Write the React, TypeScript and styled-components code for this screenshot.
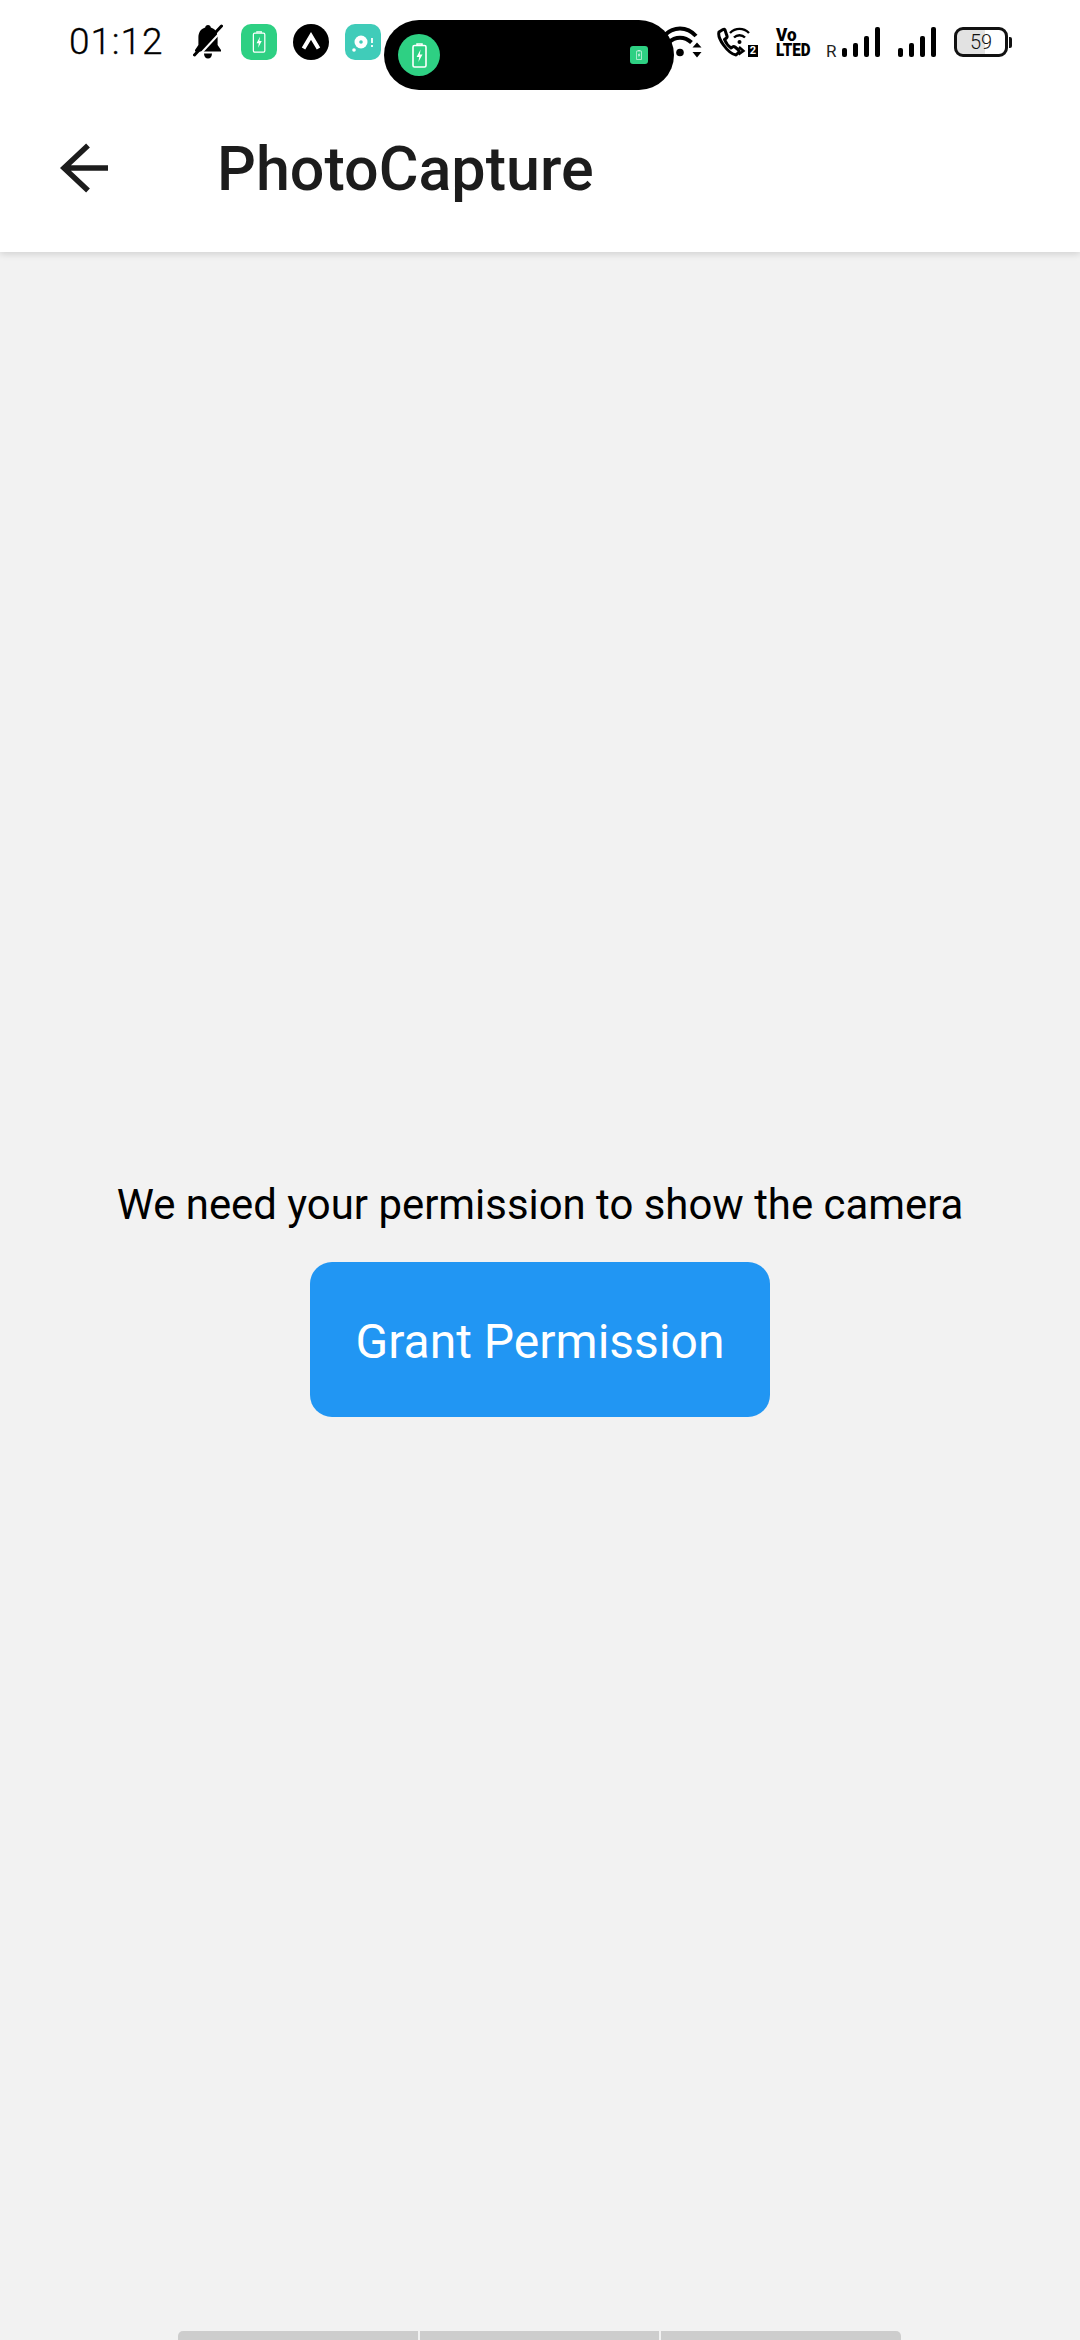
import React from "react";
import styled, { createGlobalStyle } from "styled-components";

const Global = createGlobalStyle`
  html, body { margin: 0; padding: 0; background: #f2f2f2; }
  * { box-sizing: border-box; }
  #root { width: 1080px; height: 2340px; }
`;

const Page = styled.div`
  position: relative;
  width: 1080px;
  height: 2340px;
  display: flex;
  flex-direction: column;
  overflow: hidden;
  background: #f2f2f2;
  font-family: Roboto, "Liberation Sans", sans-serif;
`;

const Header = styled.header`
  background: #fff;
  box-shadow: 0 2px 7px rgba(0, 0, 0, 0.14);
  position: relative;
  z-index: 1;
`;

const StatusBar = styled.div`
  position: relative;
  height: 84px;
  display: flex;
  justify-content: space-between;
  padding: 24px 68px 0 69px;
`;

const StatusGroup = styled.div`
  display: flex;
  align-items: flex-start;
`;

const Clock = styled.span`
  width: 93px;
  font-size: 37px;
  line-height: 36px;
  font-weight: 300;
  letter-spacing: 0.9px;
  color: #000;
  margin-right: 31px;
  -webkit-text-stroke: 0.3px #000;
`;

const Glyph = styled.svg<{ $left?: number; $top?: number }>`
  display: block;
  flex: none;
  margin-left: ${(p) => p.$left ?? 0}px;
  margin-top: ${(p) => p.$top ?? 0}px;
`;

const CallIcon = styled.div`
  position: relative;
  width: 41px;
  height: 30px;
  margin: 3px 0 0 15px;
`;

const SimBadge = styled.span`
  position: absolute;
  right: 0;
  bottom: 0;
  width: 10px;
  height: 12px;
  background: #000;
  color: #fff;
  font-size: 11px;
  line-height: 12px;
  font-weight: 700;
  text-align: center;
`;

const VolteStack = styled.div`
  width: 35px;
  height: 30px;
  margin: 3px 0 0 18px;
  display: flex;
  flex-direction: column;
  color: #000;
  font-weight: 900;
  font-size: 18px;
  line-height: 15px;
`;

const VolteLine = styled.span<{ $scale: number }>`
  display: block;
  white-space: nowrap;
  transform-origin: left center;
  transform: scaleX(${(p) => p.$scale});
`;

const Roaming = styled.span`
  font-size: 17px;
  line-height: 13px;
  color: #222;
  margin: 21px 0 0 15px;
  width: 10px;
`;

const BatteryBox = styled.div`
  position: relative;
  width: 54px;
  height: 30px;
  margin: 3px 0 0 17px;
  border: 3px solid #111;
  border-radius: 9px;
  overflow: hidden;
  display: flex;
  align-items: center;
  justify-content: center;
  font-size: 20px;
  font-weight: 300;
  color: #111;
  background: linear-gradient(90deg, #e2e2e2 0 59%, #fff 59% 100%);
`;

const BatteryNub = styled.div`
  width: 3px;
  height: 11px;
  margin: 13px 0 0 1px;
  background: #111;
  border-radius: 0 2px 2px 0;
`;

const Island = styled.div`
  position: absolute;
  left: 384px;
  top: 20px;
  width: 290px;
  height: 70px;
  border-radius: 35px;
  background: #000;
  display: flex;
  align-items: center;
  justify-content: space-between;
  padding: 0 26px 0 14px;
`;

const IslandCircle = styled.div`
  width: 42px;
  height: 42px;
  border-radius: 50%;
  background: #2ed083;
  display: flex;
  align-items: center;
  justify-content: center;
`;

const IslandChip = styled.div`
  width: 18px;
  height: 18px;
  border-radius: 3px;
  background: #2ed083;
  display: flex;
  align-items: center;
  justify-content: center;
`;

const Toolbar = styled.div`
  height: 168px;
  display: flex;
  align-items: center;
  padding-left: 60px;
`;

const BackButton = styled.button`
  width: 50px;
  height: 50px;
  padding: 0;
  border: 0;
  background: none;
  margin-right: 107px;
`;

const Title = styled.h1`
  margin: 0;
  padding-top: 2px;
  font-size: 61px;
  line-height: 70px;
  font-weight: 500;
  color: #1c1c1c;
`;

const Body = styled.main`
  flex: 1;
  display: flex;
  flex-direction: column;
  align-items: center;
  justify-content: center;
`;

const Message = styled.p`
  margin: 0 0 28px;
  font-size: 41.9px;
  line-height: 58px;
  color: #000;
  white-space: nowrap;
`;

const GrantButton = styled.button`
  width: 460px;
  height: 155px;
  border: 0;
  border-radius: 22px;
  background: #2196f3;
  color: #fff;
  font-family: inherit;
  font-size: 48px;
  padding: 5px 0 0;
`;

const GestureBar = styled.div`
  position: absolute;
  left: 178px;
  bottom: 0;
  width: 723px;
  height: 9px;
  display: flex;
  gap: 2px;
  border-radius: 5px 5px 0 0;
  overflow: hidden;
`;

const GestureSegment = styled.div`
  flex: 1;
  background: #cdcdcd;
`;

const BatteryMark = ({ size }: { size: number }) => (
  <svg width={size * 0.6} height={size} viewBox="0 0 15 25" fill="none">
    <path d="M5 2V1h5v1" stroke="#fff" strokeWidth="1.5" />
    <rect x="1" y="2.5" width="13" height="21.5" rx="1.5" stroke="#fff" strokeWidth="1.6" />
    <path d="M8.6 6.5 4.6 14h2.6l-.8 5 4.1-7.6H7.8z" fill="#fff" />
  </svg>
);

const SignalBars = ({ left }: { left: number }) => (
  <Glyph width="39" height="30" viewBox="0 0 39 30" $left={left} $top={3}>
    <rect x="0" y="21" width="5" height="9" rx="2" />
    <rect x="11" y="16" width="5" height="14" rx="2" />
    <rect x="22" y="9" width="5" height="21" rx="2" />
    <rect x="33" y="0" width="5" height="30" rx="2" />
  </Glyph>
);

export default function App() {
  return (
    <Page>
      <Global />
      <Header>
        <StatusBar>
          <StatusGroup>
            <Clock>01:12</Clock>
            <Glyph width="30" height="36" viewBox="0 0 30 36">
              <path d="M15 1c1.700 0 2.600 1 2.800 2.600C22.600 5 24.600 9 24.600 13.500V21l3.400 5v1.600H2V26l3.400-5v-7.500C5.400 9 7.400 5 12.200 3.600 12.400 2 13.300 1 15 1z" fill="#000" />
              <path d="M11 29.500h8c0 3-1.600 5-4 5s-4-2-4-5z" fill="#000" />
              <path d="M30 5.500 5 32.500" stroke="#fff" strokeWidth="2" />
              <path d="M28.500 2 1.500 31" stroke="#000" strokeWidth="3" strokeLinecap="round" />
            </Glyph>
            <Glyph width="36" height="36" viewBox="0 0 36 36" $left={18}>
              <rect width="36" height="36" rx="10" fill="#2ed083" />
              <g transform="translate(11.500 7) scale(.88)">
                <path d="M5 2V1h5v1" stroke="#fff" strokeWidth="1.500" fill="none" />
                <rect x="1" y="2.500" width="13" height="21.500" rx="1.500" stroke="#fff" strokeWidth="1.400" fill="none" />
                <path d="M8.600 6.500 4.600 14h2.600l-.8 5 4.100-7.600H7.800z" fill="#fff" />
              </g>
            </Glyph>
            <Glyph width="36" height="36" viewBox="0 0 36 36" $left={16}>
              <circle cx="18" cy="18" r="18" fill="#000" />
              <path d="M10.500 24.500 18 12l7.500 12.500" stroke="#fff" strokeWidth="4" fill="none" />
            </Glyph>
            <Glyph width="36" height="36" viewBox="0 0 36 36" $left={16}>
              <rect width="36" height="36" rx="10" fill="#40ccb9" />
              <circle cx="16" cy="18" r="6.500" fill="#fff" />
              <circle cx="16" cy="18" r="1.800" fill="#40ccb9" />
              <circle cx="9" cy="26" r="1.800" fill="#fff" />
              <path d="M27 14v5M27 21v2" stroke="#fff" strokeWidth="1.800" />
            </Glyph>
          </StatusGroup>
          <StatusGroup>
            <Glyph width="38" height="32" viewBox="0 0 38 32" $top={2}>
              <path d="M0 10C9 0 23 0 32 10" stroke="#000" strokeWidth="4" fill="none" />
              <path d="M4.500 16.500c7-6.500 16-6.500 23 0" stroke="#000" strokeWidth="4" fill="none" />
              <circle cx="16" cy="26.500" r="3.800" fill="#000" />
              <path d="M28.500 21.500l4.500-5 4.500 5zM28.500 26l4.500 5.500 4.500-5.500z" fill="#000" />
            </Glyph>
            <CallIcon>
              <svg width="41" height="30" viewBox="0 0 41 30" fill="none">
                <path d="M6 2.500 2 5c-1 3 1 8 4.500 13 4 5.500 9 9.500 12.500 10l2.500-2.500c1-1 1-1.500 0-2.500l-3.500-3c-1-.8-1.500-.8-2.500 0l-1.500 1c-3-2-5-5-6.500-8.500l2-1.500c.8-.8.800-1.500.3-2.500L8 3C7.500 2 7 2 6 2.500z" stroke="#000" strokeWidth="3" strokeLinejoin="round" />
                <path d="M13 6c5.500-5.500 13.500-5.500 19 0M17 10.500c3-3 8-3 11 0" stroke="#000" strokeWidth="2.400" />
                <circle cx="22.500" cy="15" r="2" fill="#000" />
                <path d="M22 20l4.500 4-5 3.500" stroke="#000" strokeWidth="2.400" />
              </svg>
              <SimBadge>2</SimBadge>
            </CallIcon>
            <VolteStack>
              <VolteLine $scale={0.95}>Vo</VolteLine>
              <VolteLine $scale={0.84}>LTED</VolteLine>
            </VolteStack>
            <Roaming>R</Roaming>
            <SignalBars left={6} />
            <SignalBars left={17} />
            <BatteryBox>59</BatteryBox>
            <BatteryNub />
          </StatusGroup>
          <Island>
            <IslandCircle>
              <BatteryMark size={25} />
            </IslandCircle>
            <IslandChip>
              <BatteryMark size={10} />
            </IslandChip>
          </Island>
        </StatusBar>
        <Toolbar>
          <BackButton aria-label="Back">
            <svg width="50" height="50" viewBox="0 0 50 50" fill="none">
              <path d="M48 25H5M28 2.500 4 25l24 22.500" stroke="#1c1c1c" strokeWidth="5.500" />
            </svg>
          </BackButton>
          <Title>PhotoCapture</Title>
        </Toolbar>
      </Header>
      <Body>
        <Message>We need your permission to show the camera</Message>
        <GrantButton>Grant Permission</GrantButton>
      </Body>
      <GestureBar>
        <GestureSegment />
        <GestureSegment />
        <GestureSegment />
      </GestureBar>
    </Page>
  );
}
